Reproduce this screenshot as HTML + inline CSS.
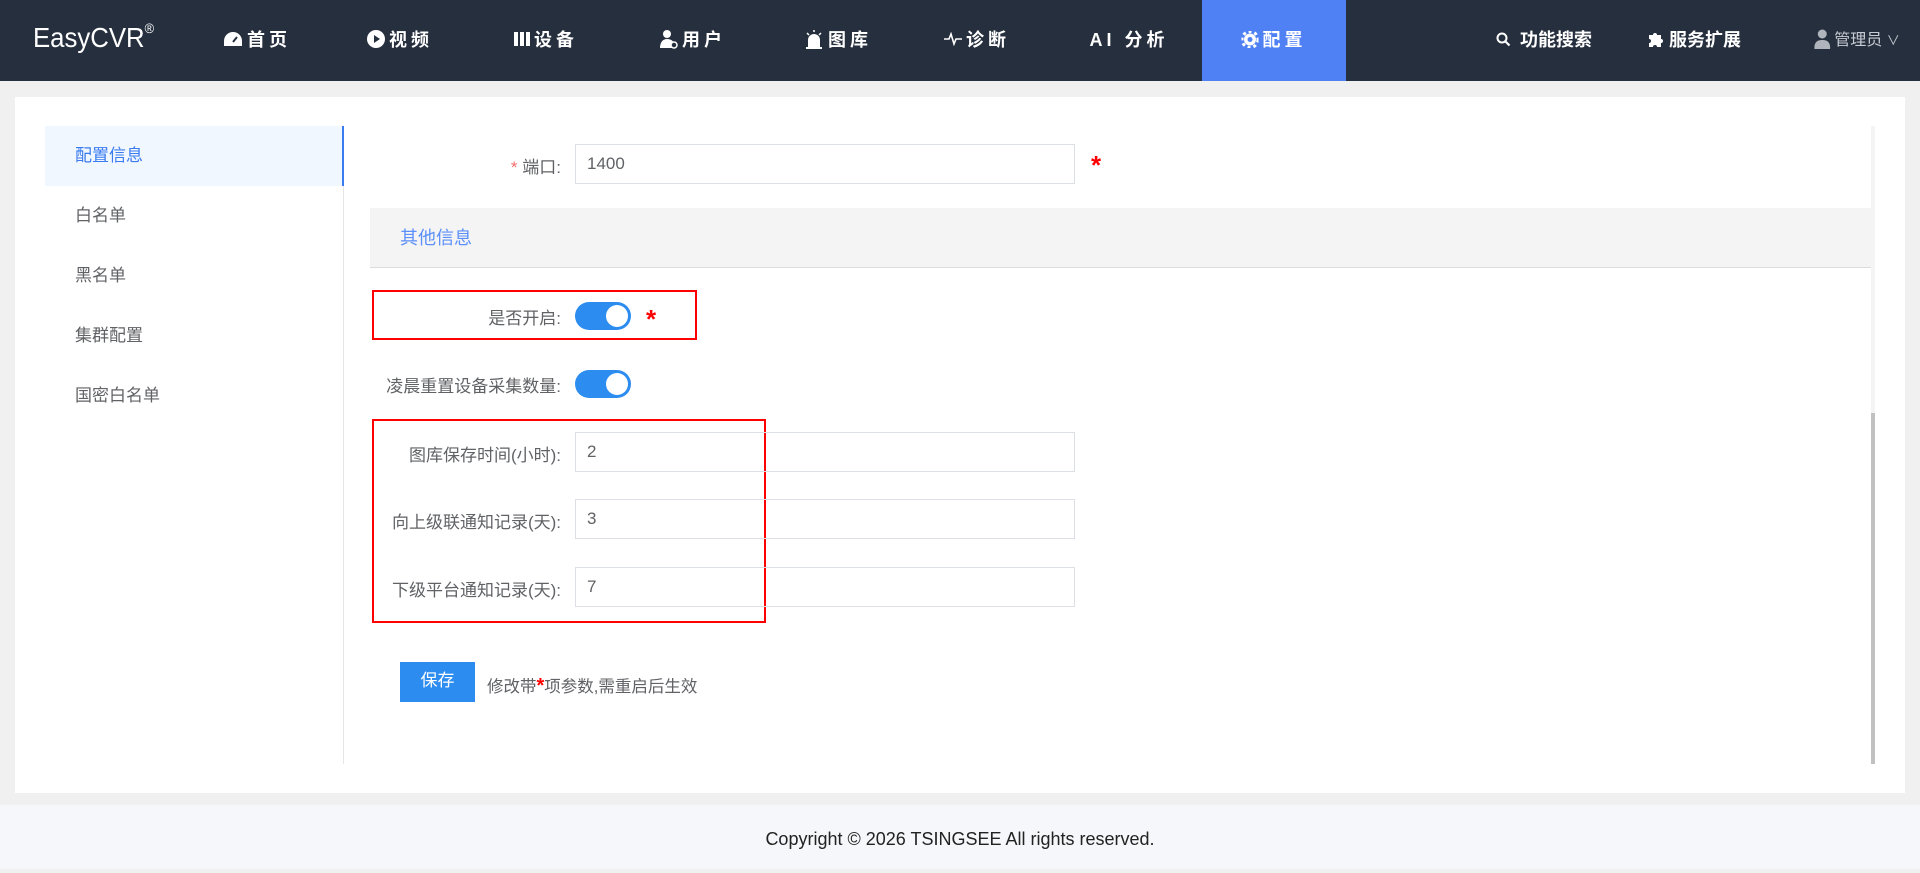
<!DOCTYPE html>
<html><head><meta charset="utf-8"><style>
*{margin:0;padding:0;box-sizing:border-box}
body{width:1920px;height:869px;background:#f0f0f0;font-family:"Liberation Sans","Noto Sans CJK SC",sans-serif;position:relative;overflow:hidden;color:#606266}
.nav{position:absolute;left:0;top:0;width:1920px;height:81px;background:#262f3e;color:#fff}
.logo{position:absolute;left:33px;top:22px;font-size:28px;color:#fff;transform:scaleX(0.92);transform-origin:left}
.logo sup{font-size:14px;vertical-align:top;position:relative;top:-2px}
.ni{position:absolute;top:0;height:81px;line-height:81px;font-size:18px;font-weight:bold;letter-spacing:4px;white-space:nowrap;transform:translateX(-50%)}
.act{position:absolute;left:1202px;top:0;width:144px;height:81px;background:#4f81f5}
.ic{display:inline-block;vertical-align:middle;margin-right:4px;position:relative;top:-2px}
.card{position:absolute;left:15px;top:97px;width:1890px;height:696px;background:#fff}
.side{position:absolute;left:45px;top:126px;width:299px;height:638px;border-right:1px solid #e6e6e6}
.si{height:60px;line-height:60px;padding-left:30px;font-size:17px;color:#606266}
.si.a{background:#f0f7ff;color:#3a7bf0;border-right:2px solid #3a7bf0;margin-right:-1px}
.lbl{position:absolute;right:1359px;font-size:17px;color:#606266;white-space:nowrap;text-align:right}
.inp{position:absolute;left:575px;width:500px;height:40px;border:1px solid #dcdfe6;font-size:17px;color:#606266;padding-left:11px;line-height:38px}
.tg{position:absolute;left:575px;width:56px;height:28px;border-radius:14px;background:#2d8cf0}
.tg:after{content:"";position:absolute;right:3px;top:3px;width:22px;height:22px;border-radius:50%;background:#fff}
.ast{position:absolute;color:#f00;font-size:26px;font-weight:bold}
.rb{position:absolute;border:2px solid #f00}
.foot{position:absolute;left:0;top:805px;width:1920px;height:64px;background:#f5f7fa;text-align:center;line-height:68px;font-size:18px;color:#222}
</style></head><body>
<div class="nav">
<div class="logo">EasyCVR<sup>®</sup></div>
<div class="act"></div>
<div class="ni" style="left:257px"><svg class="ic" width="20" height="16" viewBox="0 0 20 16"><path d="M10 1a9 9 0 0 0-9 9v5h18v-5a9 9 0 0 0-9-9z" fill="#fff"/><path d="M10 11l4-5" stroke="#262f3e" stroke-width="2"/></svg>首页</div>
<div class="ni" style="left:400px"><svg class="ic" width="18" height="18" viewBox="0 0 18 18"><circle cx="9" cy="9" r="9" fill="#fff"/><path d="M7 5l6 4-6 4z" fill="#262f3e"/></svg>视频</div>
<div class="ni" style="left:546px"><svg class="ic" width="16" height="16" viewBox="0 0 16 16"><rect x="0" y="1" width="4" height="14" fill="#fff"/><rect x="6" y="1" width="4" height="14" fill="#fff"/><rect x="12" y="1" width="4" height="14" fill="#fff"/></svg>设备</div>
<div class="ni" style="left:693px"><svg class="ic" width="18" height="20" viewBox="0 0 18 20"><circle cx="7" cy="5" r="4" fill="#fff"/><path d="M0 19c0-6 3-9 7-9s6 2 7 4v5z" fill="#fff"/><circle cx="14" cy="16" r="3" fill="#262f3e" stroke="#fff" stroke-width="1.5"/></svg>用户</div>
<div class="ni" style="left:838px"><svg class="ic" width="20" height="20" viewBox="0 0 20 20"><path d="M4 18v-7a6 6 0 0 1 12 0v7z" fill="#fff"/><rect x="2" y="18" width="16" height="2" fill="#fff"/><path d="M10 1v2M3 4l2 2M17 4l-2 2" stroke="#fff" stroke-width="1.5"/></svg>图库</div>
<div class="ni" style="left:977px"><svg class="ic" width="18" height="14" viewBox="0 0 18 14"><path d="M0 7h5l2-5 3 10 2-5h6" stroke="#fff" stroke-width="1.6" fill="none"/></svg>诊断</div>
<div class="ni" style="left:1129px">AI 分析</div>
<div class="ni" style="left:1274px"><svg class="ic" width="17" height="17" viewBox="0 0 17 17"><circle cx="8.5" cy="8.5" r="6" fill="#fff"/><circle cx="8.5" cy="8.5" r="8" fill="none" stroke="#fff" stroke-width="3" stroke-dasharray="3 3"/><circle cx="8.5" cy="8.5" r="2.5" fill="#4f81f5"/></svg>配置</div>
<div class="ni" style="left:1544px;letter-spacing:0"><svg class="ic" width="15" height="15" viewBox="0 0 15 15"><circle cx="6" cy="6" r="4.5" stroke="#fff" stroke-width="2" fill="none"/><path d="M9.5 9.5l4 4" stroke="#fff" stroke-width="2.2"/></svg> 功能搜索</div>
<div class="ni" style="left:1694px;letter-spacing:0"><svg class="ic" width="18" height="18" viewBox="0 0 18 18"><path d="M2 5h4a2 2 0 1 1 4 0h4v4a2 2 0 1 1 0 4v4h-4a2 2 0 1 0-4 0H2v-4a2 2 0 1 0 0-4z" fill="#fff"/></svg>服务扩展</div>
<div class="ni" style="left:1857px;letter-spacing:0;font-weight:normal;font-size:16px;color:#c8ccd4"><svg class="ic" width="16" height="20" viewBox="0 0 16 20"><circle cx="8" cy="5" r="4.5" fill="#b0b4bc"/><path d="M0 20c0-7 3-9 8-9s8 2 8 9z" fill="#b0b4bc"/></svg>管理员 <span style="font-size:13px">∨</span></div>
</div>
<div class="card"></div>
<div class="side">
<div class="si a">配置信息</div><div class="si">白名单</div><div class="si">黑名单</div><div class="si">集群配置</div><div class="si">国密白名单</div>
</div>
<div class="lbl" style="top:153px"><span style="color:#f56c6c">* </span>端口:</div>
<div class="inp" style="top:144px">1400</div>
<div class="ast" style="left:1091px;top:150px">*</div>
<div style="position:absolute;left:370px;top:208px;width:1501px;height:60px;background:#f4f4f4;border-bottom:1px solid #dcdcdc;line-height:60px;padding-left:30px;font-size:18px;color:#5b8ff9">其他信息</div>
<div style="position:absolute;left:1871px;top:126px;width:4px;height:638px;background:#f4f4f4"></div>
<div style="position:absolute;left:1871px;top:413px;width:4px;height:351px;background:#c1c1c1"></div>
<div class="rb" style="left:372px;top:290px;width:325px;height:50px"></div>
<div class="lbl" style="top:304px">是否开启:</div>
<div class="tg" style="top:302px"></div>
<div class="ast" style="left:646px;top:304px">*</div>
<div class="lbl" style="top:372px">凌晨重置设备采集数量:</div>
<div class="tg" style="top:370px"></div>
<div class="rb" style="left:372px;top:419px;width:394px;height:204px"></div>
<div class="lbl" style="top:441px">图库保存时间(小时):</div>
<div class="inp" style="top:432px">2</div>
<div class="lbl" style="top:508px">向上级联通知记录(天):</div>
<div class="inp" style="top:499px">3</div>
<div class="lbl" style="top:576px">下级平台通知记录(天):</div>
<div class="inp" style="top:567px">7</div>
<div style="position:absolute;left:400px;top:662px;width:75px;height:40px;background:#2d8cf0;color:#fff;font-size:17px;text-align:center;line-height:38px">保存</div>
<div style="position:absolute;left:487px;top:673px;font-size:16.5px;color:#606266">修改带<span style="color:#f00;font-weight:bold;font-size:20px">*</span>项参数,需重启后生效</div>
<div class="foot">Copyright © 2026 TSINGSEE All rights reserved.</div>
</body></html>
